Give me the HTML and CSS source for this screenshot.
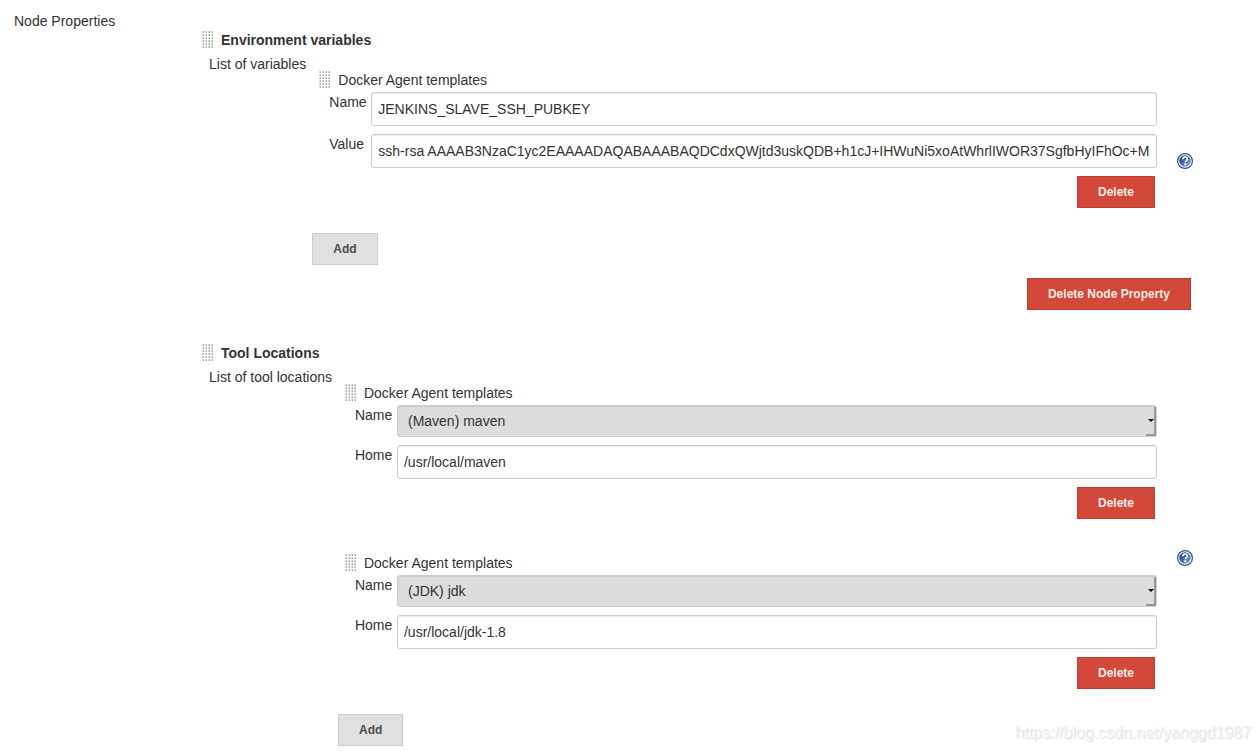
FILE: index.html
```html
<!DOCTYPE html>
<html lang="en">
<head>
<meta charset="utf-8">
<title>Node Properties</title>
<link rel="stylesheet" href="styles.css">
</head>
<body>
<svg class="defs" width="0" height="0" aria-hidden="true">
  <defs>
    <pattern id="dots" width="3" height="3" patternUnits="userSpaceOnUse">
      <rect width="2" height="2" fill="#dcdad7"/>
      <rect x="1" width="1" height="1" fill="#c4c2bf"/>
      <rect x="1" y="1" width="1" height="1" fill="#a5a29e"/>
    </pattern>
    <linearGradient id="ball" x1="0" y1="0" x2="1" y2="1">
      <stop offset="0.2" stop-color="#204a87"/>
      <stop offset="1" stop-color="#8fb0da"/>
    </linearGradient>
    <symbol id="grip" viewBox="0 0 12 18"><rect width="12" height="18" fill="url(#dots)"/></symbol>
    <symbol id="help" viewBox="0 0 16 16">
      <circle cx="8" cy="8" r="7.4" fill="#fff" stroke="#2c5591" stroke-width="1.2"/>
      <circle cx="8" cy="8" r="5.8" fill="url(#ball)"/>
      <path d="M5.7 6.3C5.8 4.7 6.800 4 8.100 4c1.400 0 2.300.8 2.300 1.900 0 1.600-2.100 1.700-2.100 3.400" fill="none" stroke="#fff" stroke-width="1.600"/>
      <rect x="7.300" y="10.300" width="1.900" height="1.900" fill="#fff"/>
    </symbol>
  </defs>
</svg>
<form class="page">
  <div class="page-label">Node Properties</div>
  <main class="properties">
    <section class="property">
      <h2 class="property-title"><svg class="grip"><use href="#grip"/></svg>Environment variables</h2>
      <div class="property-body">
        <div class="list-label">List of variables</div>
        <div class="list">
          <div class="item">
            <div class="item-title"><svg class="grip"><use href="#grip"/></svg>Docker Agent templates</div>
            <div class="fields">
              <div class="field"><label for="env-name">Name</label><input class="control" id="env-name" type="text" value="JENKINS_SLAVE_SSH_PUBKEY"></div>
              <div class="field"><label for="env-value">Value</label><input class="control" id="env-value" type="text" value="ssh-rsa AAAAB3NzaC1yc2EAAAADAQABAAABAQDCdxQWjtd3uskQDB+h1cJ+IHWuNi5xoAtWhrlIWOR37SgfbHyIFhOc+M"></div>
              <button class="button danger" type="button">Delete</button>
            </div>
          </div>
          <button class="button" type="button">Add</button>
        </div>
        <button class="help" type="button" aria-label="Help"><svg class="help-icon"><use href="#help"/></svg></button>
      </div>
      <button class="button danger remove" type="button">Delete Node Property</button>
    </section>
    <section class="property">
      <h2 class="property-title"><svg class="grip"><use href="#grip"/></svg>Tool Locations</h2>
      <div class="property-body">
        <div class="list-label">List of tool locations</div>
        <div class="list">
          <div class="item">
            <div class="item-title"><svg class="grip"><use href="#grip"/></svg>Docker Agent templates</div>
            <div class="fields">
              <div class="field"><label for="maven-name">Name</label><div class="select-box"><select class="control" id="maven-name"><option>(Maven) maven</option></select></div></div>
              <div class="field"><label for="maven-home">Home</label><input class="control" id="maven-home" type="text" value="/usr/local/maven"></div>
              <button class="button danger" type="button">Delete</button>
            </div>
          </div>
          <div class="item">
            <div class="item-title"><svg class="grip"><use href="#grip"/></svg>Docker Agent templates</div>
            <div class="fields">
              <div class="field"><label for="jdk-name">Name</label><div class="select-box"><select class="control" id="jdk-name"><option>(JDK) jdk</option></select></div></div>
              <div class="field"><label for="jdk-home">Home</label><input class="control" id="jdk-home" type="text" value="/usr/local/jdk-1.8"></div>
              <button class="button danger" type="button">Delete</button>
            </div>
          </div>
          <button class="button" type="button">Add</button>
        </div>
        <button class="help" type="button" aria-label="Help"><svg class="help-icon"><use href="#help"/></svg></button>
      </div>
    </section>
  </main>
</form>
<div class="watermark">https://blog.csdn.net/yanggd1987</div>
</body>
</html>
```

FILE: styles.css
```css
* {
  box-sizing: border-box;
}

body {
  margin: 0;
  position: relative;
  background: #fff;
  color: #333;
  font: 14px/16px "Liberation Sans", Arial, sans-serif;
}

.defs {
  position: absolute;
}

.page {
  display: flex;
  padding: 13px 67px 5px 14px;
}

.page-label {
  flex: 0 0 188px;
}

.properties {
  flex: 1;
  min-width: 0;
  padding-top: 17px;
  display: flex;
  flex-direction: column;
  gap: 33px;
}

.property {
  display: flex;
  flex-direction: column;
}

.property-title,
.item-title {
  display: flex;
  align-items: center;
  gap: 7px;
  height: 20px;
  margin: 0;
  font-size: 14px;
}

.grip {
  width: 12px;
  height: 18px;
}

.property-body {
  display: flex;
  margin-top: 6px;
  padding-left: 7px;
}

.list-label {
  flex: none;
  margin-right: 6px;
}

.list {
  flex: 1;
  min-width: 0;
  padding-top: 14px;
}

.item {
  margin-bottom: 25px;
}

.item + .item {
  margin-top: 34px;
}

.item-title {
  padding-left: 7px;
}

.fields {
  display: flex;
  flex-direction: column;
  gap: 8px;
  margin-top: 2px;
  padding-left: 17px;
}

.field {
  display: flex;
}

.field label {
  flex: 0 0 42px;
  padding-top: 2px;
}

.control {
  flex: 1;
  min-width: 0;
  width: 100%;
  height: 34px;
  margin: 0;
  padding: 0 6px;
  border: 1px solid #ccc;
  border-radius: 3px;
  background: #fff;
  box-shadow: inset 0 1px 1px rgba(0, 0, 0, 0.08);
  color: #333;
  font: inherit;
}

.select-box {
  position: relative;
  flex: 1;
  display: flex;
}

select.control {
  appearance: none;
  height: 32px;
  padding: 0 10px;
  background: #ddd;
}

.select-box::before {
  content: "";
  position: absolute;
  top: 2px;
  right: 1px;
  bottom: 1px;
  width: 8px;
  border: solid #999;
  border-width: 0 2px 2px 0;
  pointer-events: none;
}

.select-box::after {
  content: "";
  position: absolute;
  top: 14px;
  right: 3px;
  border: 3px solid transparent;
  border-top-color: #000;
  border-bottom: 0;
  pointer-events: none;
}

.button {
  height: 32px;
  padding: 0 20px;
  border: 1px solid #ccc;
  background: #e0e0e0;
  color: #4d4d4d;
  font: bold 12px/16px "Liberation Sans", Arial, sans-serif;
}

.danger {
  align-self: flex-end;
  margin-right: 2px;
  border-color: #c03c2e;
  background: #d24939;
  color: #f3e9e8;
}

.remove {
  margin-top: 13px;
}

.help {
  align-self: center;
  display: flex;
  margin-left: 20px;
  padding: 0;
  border: 0;
  background: none;
}

.help-icon {
  width: 16px;
  height: 16px;
}

.watermark {
  position: absolute;
  right: 9px;
  bottom: 9px;
  color: #f4f4f4;
  font-size: 16px;
  line-height: 18px;
  text-shadow: 1px 1px 1px #ddd;
}
```
